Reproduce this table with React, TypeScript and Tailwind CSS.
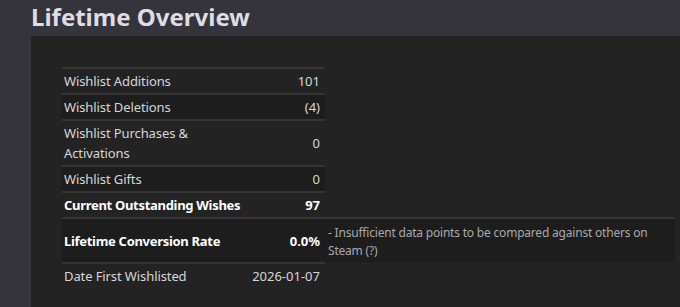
import React from 'react';

type Row = {
  label: string;
  value: string;
  bold?: boolean;
  note?: string;
};

const rows: Row[] = [
  { label: 'Wishlist Additions', value: '101' },
  { label: 'Wishlist Deletions', value: '(4)' },
  { label: 'Wishlist Purchases & Activations', value: '0' },
  { label: 'Wishlist Gifts', value: '0' },
  { label: 'Current Outstanding Wishes', value: '97', bold: true },
  {
    label: 'Lifetime Conversion Rate',
    value: '0.0%',
    bold: true,
    note: '- Insufficient data points to be compared against others on Steam (?)',
  },
  { label: 'Date First Wishlisted', value: '2026-01-07' },
];

const App: React.FC = () => {
  return (
    <div
      className="w-[680px] h-[307px] overflow-hidden bg-[#35343d] flex flex-col"
      style={{ fontFamily: '"Noto Sans", "Open Sans", sans-serif' }}
    >
      <h1 className="shrink-0 pl-[31px] h-[36px] text-[24px] leading-[34px] font-bold text-[#dedde3]">
        Lifetime Overview
      </h1>
      <div className="ml-[31px] flex-1 bg-[#232324] pt-[31px] pl-[31px]">
        {rows.map((row, i) => (
          <div key={row.label} className="flex">
            <div
              className={`w-[263px] flex items-center justify-between border-t-2 border-[#353536] px-[2px] py-[2px] ${
                i % 2 === 1 ? 'bg-[#1d1d1e]' : ''
              } ${row.bold ? 'font-bold text-white' : 'text-[#d6d6d8]'}`}
            >
              <span
                className={`text-[13px] leading-[20px] w-[180px] tracking-[-0.1px] ${
                  row.bold ? 'whitespace-nowrap tracking-[-0.3px]' : ''
                }`}
              >
                {row.label}
              </span>
              <span className="text-[13px] leading-[20px] pr-[3px]">{row.value}</span>
            </div>
            {row.note && (
              <div className="w-[350px] border-t-2 border-[#353536] bg-[#1d1d1e] pl-[3px] pr-[8px] pt-[5px] pb-[2px] text-[12px] leading-[18px] tracking-[-0.2px] text-[#a9a9ad]">
                {row.note}
              </div>
            )}
          </div>
        ))}
      </div>
    </div>
  );
};

export default App;
